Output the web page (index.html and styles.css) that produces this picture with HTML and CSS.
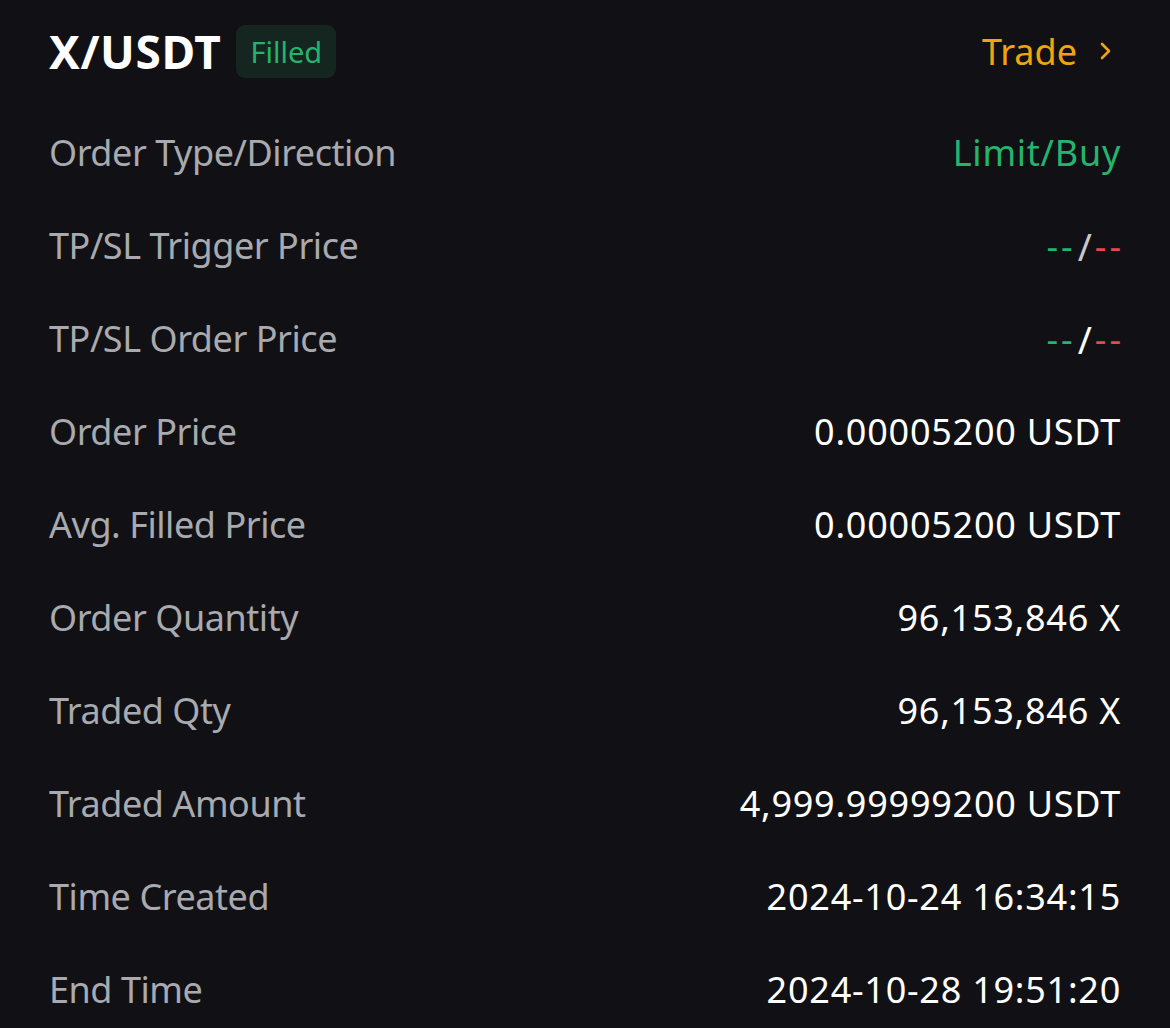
FILE: index.html
```html
<!DOCTYPE html>
<html>
<head>
<meta charset="utf-8">
<link rel="stylesheet" href="styles.css">
</head>
<body>
<div class="page">
  <div class="header">
    <div class="title">
      <span class="pair">X/USDT</span>
      <span class="badge">Filled</span>
    </div>
    <div class="trade">
      <span>Trade</span>
      <svg class="chev" width="14" height="22" viewBox="0 0 14 22"><path d="M3 4 L10 11 L3 18" fill="none" stroke="#f0a50e" stroke-width="2.6" stroke-linecap="round" stroke-linejoin="round"/></svg>
    </div>
  </div>
  <div class="rows">
    <div class="row"><span class="label">Order Type/Direction</span><span class="value green">Limit/Buy</span></div>
    <div class="row"><span class="label">TP/SL Trigger Price</span><span class="value dim"><span class="green dash">--</span><span class="slash">/</span><span class="red dash">--</span></span></div>
    <div class="row"><span class="label">TP/SL Order Price</span><span class="value"><span class="green dash">--</span><span class="slash">/</span><span class="red dash">--</span></span></div>
    <div class="row"><span class="label">Order Price</span><span class="value">0.00005200 USDT</span></div>
    <div class="row"><span class="label">Avg. Filled Price</span><span class="value">0.00005200 USDT</span></div>
    <div class="row"><span class="label">Order Quantity</span><span class="value">96,153,846 X</span></div>
    <div class="row"><span class="label">Traded Qty</span><span class="value">96,153,846 X</span></div>
    <div class="row"><span class="label">Traded Amount</span><span class="value">4,999.99999200 USDT</span></div>
    <div class="row"><span class="label">Time Created</span><span class="value">2024-10-24 16:34:15</span></div>
    <div class="row"><span class="label">End Time</span><span class="value">2024-10-28 19:51:20</span></div>
  </div>
</div>
</body>
</html>
```
FILE: styles.css
```css
html, body {
  margin: 0;
  padding: 0;
  background: #111115;
}
body {
  font-family: "Noto Sans", "Open Sans", sans-serif;
  color: #ffffff;
}
.page {
  padding: 0 49px;
}
.header {
  height: 102px;
  display: flex;
  align-items: center;
  justify-content: space-between;
}
.title {
  display: flex;
  align-items: center;
  gap: 15px;
}
.pair {
  font-size: 46px;
  font-weight: 700;
  letter-spacing: 0.6px;
}
.badge {
  background: #14261f;
  color: #25b46f;
  font-size: 29px;
  line-height: 53px;
  padding: 0 14px;
  border-radius: 9px;
}
.trade {
  display: flex;
  align-items: center;
  gap: 22px;
  color: #f0a50e;
  font-size: 36px;
  padding-right: 8px;
}
.rows {
  padding-top: 4px;
}
.row {
  height: 93px;
  display: flex;
  align-items: center;
  justify-content: space-between;
  font-size: 36px;
}
.label {
  color: #a8aaaf;
  letter-spacing: -0.45px;
}
.value {
  color: #ffffff;
  letter-spacing: 0.75px;
  white-space: nowrap;
  flex-shrink: 0;
  display: flex;
  align-items: center;
}
.value.dim {
  color: #c8c9cc;
}
.dash {
  letter-spacing: 3px;
}
.red.dash {
  margin-right: -3px;
}
.slash {
  margin: 0 3px 0 2px;
  font-size: 38px;
  letter-spacing: 0;
}
.green {
  color: #25b46f;
}
.red {
  color: #e5484d;
}
```
